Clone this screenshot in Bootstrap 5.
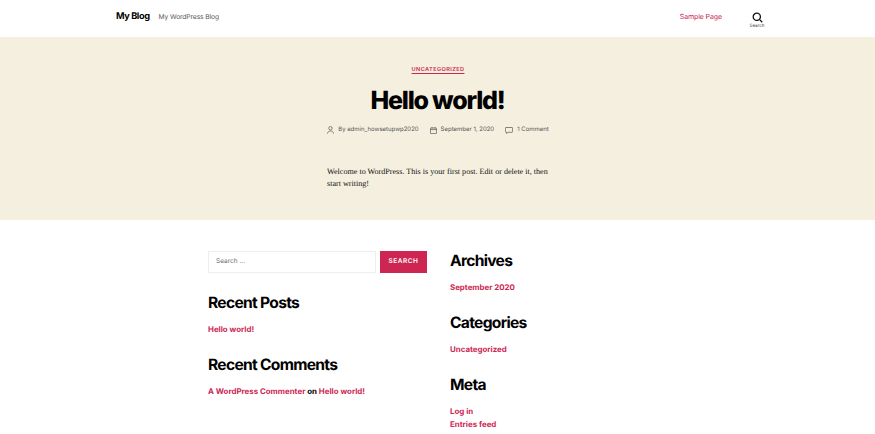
<!DOCTYPE html>
<html lang="en">
<head>
<meta charset="utf-8">
<title>My Blog</title>
<link href="https://cdn.jsdelivr.net/npm/bootstrap@5.3.0/dist/css/bootstrap.min.css" rel="stylesheet">
<style>
html, body { height: 434px; overflow: hidden; }
body { font-family: Inter, "Liberation Sans", sans-serif; background: #fff; color: #000; text-rendering: geometricPrecision; }
a { color: #cd2653; }
.site-top { height: 37px; padding: 0 103px 3px 116px; }
.site-name { font-size: 9.2px; font-weight: 700; letter-spacing: -0.4px; color: #000; }
.site-desc { font-size: 6.7px; color: #555; margin-left: 9px; letter-spacing: -0.1px; }
.top-link { font-size: 7px; text-decoration: none; letter-spacing: -0.1px; }
.search-toggle { width: 30px; margin-left: 20px; padding-top: 7px; }
.search-toggle span { font-size: 4.5px; color: #444; line-height: 7px; }
.hero { height: 183px; background: #f5efe0; }
.cat-link { font-size: 5.6px; font-weight: 600; letter-spacing: 0.4px; padding-top: 30px; padding-left: 1px; line-height: 7px; }
.cat-link a { text-underline-offset: 1.5px; }
.hero-title { font-size: 25px; font-weight: 800; letter-spacing: -1.2px; line-height: 32px; margin: 11px 0 0; color: #000; }
.meta-row { font-size: 6px; color: #555; margin-top: 8px; line-height: 10px; padding-left: 1px; }
.meta-row a { color: #555; text-decoration: none; }
.meta-row .item + .item { margin-left: 3px; }
.post-text { width: 224px; margin: 31px 0 0 327px; font-family: "Liberation Serif", serif; font-size: 8.1px; line-height: 12.4px; color: #111; }
.widgets { padding-left: 208px; padding-top: 31px; gap: 23px; }
.wcol { width: 219px; }
.wcol-b { width: 200px; }
.find-input { width: 168px; height: 22px; border: 1px solid #eeeeee; font-size: 6.5px; color: #6d6d6d; padding-left: 7px; }
.find-btn { width: 47px; height: 22px; margin-left: 4px; background: #cd2653; color: #fff; font-size: 6.5px; font-weight: 600; letter-spacing: 0.5px; }
.wtitle { font-size: 15.6px; font-weight: 700; letter-spacing: -0.7px; line-height: 20px; margin: 0; color: #000; }
.wlink { font-size: 7.9px; font-weight: 700; line-height: 13px; }
.wlink a { text-decoration: none; }
.gap-search { margin-top: 20px; }
.gap-body { margin-top: 10px; }
.gap-next { margin-top: 19px; }
</style>
</head>
<body>
<header class="site-top d-flex align-items-center justify-content-between">
  <div class="d-flex align-items-center">
    <span class="site-name">My Blog</span>
    <span class="site-desc">My WordPress Blog</span>
  </div>
  <div class="d-flex align-items-center">
    <a class="top-link" href="#">Sample Page</a>
    <div class="search-toggle d-flex flex-column align-items-center">
      <svg width="11" height="11" viewBox="0 0 11 11" fill="none" stroke="#111" stroke-width="1.3"><circle cx="4.8" cy="4.8" r="3.6"/><path d="M7.4 7.4 10.2 10.2"/></svg>
      <span>Search</span>
    </div>
  </div>
</header>
<section class="hero text-center">
  <div class="cat-link"><a href="#">UNCATEGORIZED</a></div>
  <h1 class="hero-title">Hello world!</h1>
  <div class="meta-row d-flex justify-content-center gap-2">
    <span class="item d-inline-flex align-items-center">
      <svg width="7" height="8" viewBox="0 0 7 8" fill="none" stroke="#555" stroke-width=".7"><circle cx="3.5" cy="2.2" r="1.7"/><path d="M.5 7.6C.7 5.6 2 5 3.5 5s2.8.6 3 2.6"/></svg>
      <span class="ms-1">By <a href="#">admin_howsetupwp2020</a></span>
    </span>
    <span class="item d-inline-flex align-items-center">
      <svg width="7" height="7" viewBox="0 0 7 7" fill="none" stroke="#555" stroke-width=".7"><rect x=".4" y="1" width="6.2" height="5.6" rx=".5"/><path d="M.4 2.6h6.2M2 0v1.4M5 0v1.4"/></svg>
      <span class="ms-1"><a href="#">September 1, 2020</a></span>
    </span>
    <span class="item d-inline-flex align-items-center">
      <svg width="8" height="7" viewBox="0 0 8 7" fill="none" stroke="#555" stroke-width=".7"><path d="M1 .5h6a.6.6 0 0 1 .6.6v3.6a.6.6 0 0 1-.6.6H3L1.6 6.6V5.3H1a.6.6 0 0 1-.6-.6V1.1A.6.6 0 0 1 1 .5z"/></svg>
      <span class="ms-1"><a href="#">1 Comment</a></span>
    </span>
  </div>
  <p class="post-text text-start">Welcome to WordPress. This is your first post. Edit or delete it, then start writing!</p>
</section>
<section class="widgets d-flex">
  <div class="wcol">
    <div class="d-flex">
      <div class="find-input d-flex align-items-center">Search …</div>
      <div class="find-btn d-flex align-items-center justify-content-center">SEARCH</div>
    </div>
    <h2 class="wtitle gap-search">Recent Posts</h2>
    <div class="wlink gap-body"><a href="#">Hello world!</a></div>
    <h2 class="wtitle gap-next">Recent Comments</h2>
    <div class="wlink gap-body"><a href="#">A WordPress Commenter</a> on <a href="#">Hello world!</a></div>
  </div>
  <div class="wcol-b">
    <h2 class="wtitle">Archives</h2>
    <div class="wlink gap-body"><a href="#">September 2020</a></div>
    <h2 class="wtitle gap-next">Categories</h2>
    <div class="wlink gap-body"><a href="#">Uncategorized</a></div>
    <h2 class="wtitle gap-next">Meta</h2>
    <div class="wlink gap-body"><a href="#">Log in</a></div>
    <div class="wlink"><a href="#">Entries feed</a></div>
  </div>
</section>
<script src="https://cdn.jsdelivr.net/npm/bootstrap@5.3.0/dist/js/bootstrap.bundle.min.js"></script>
</body>
</html>
